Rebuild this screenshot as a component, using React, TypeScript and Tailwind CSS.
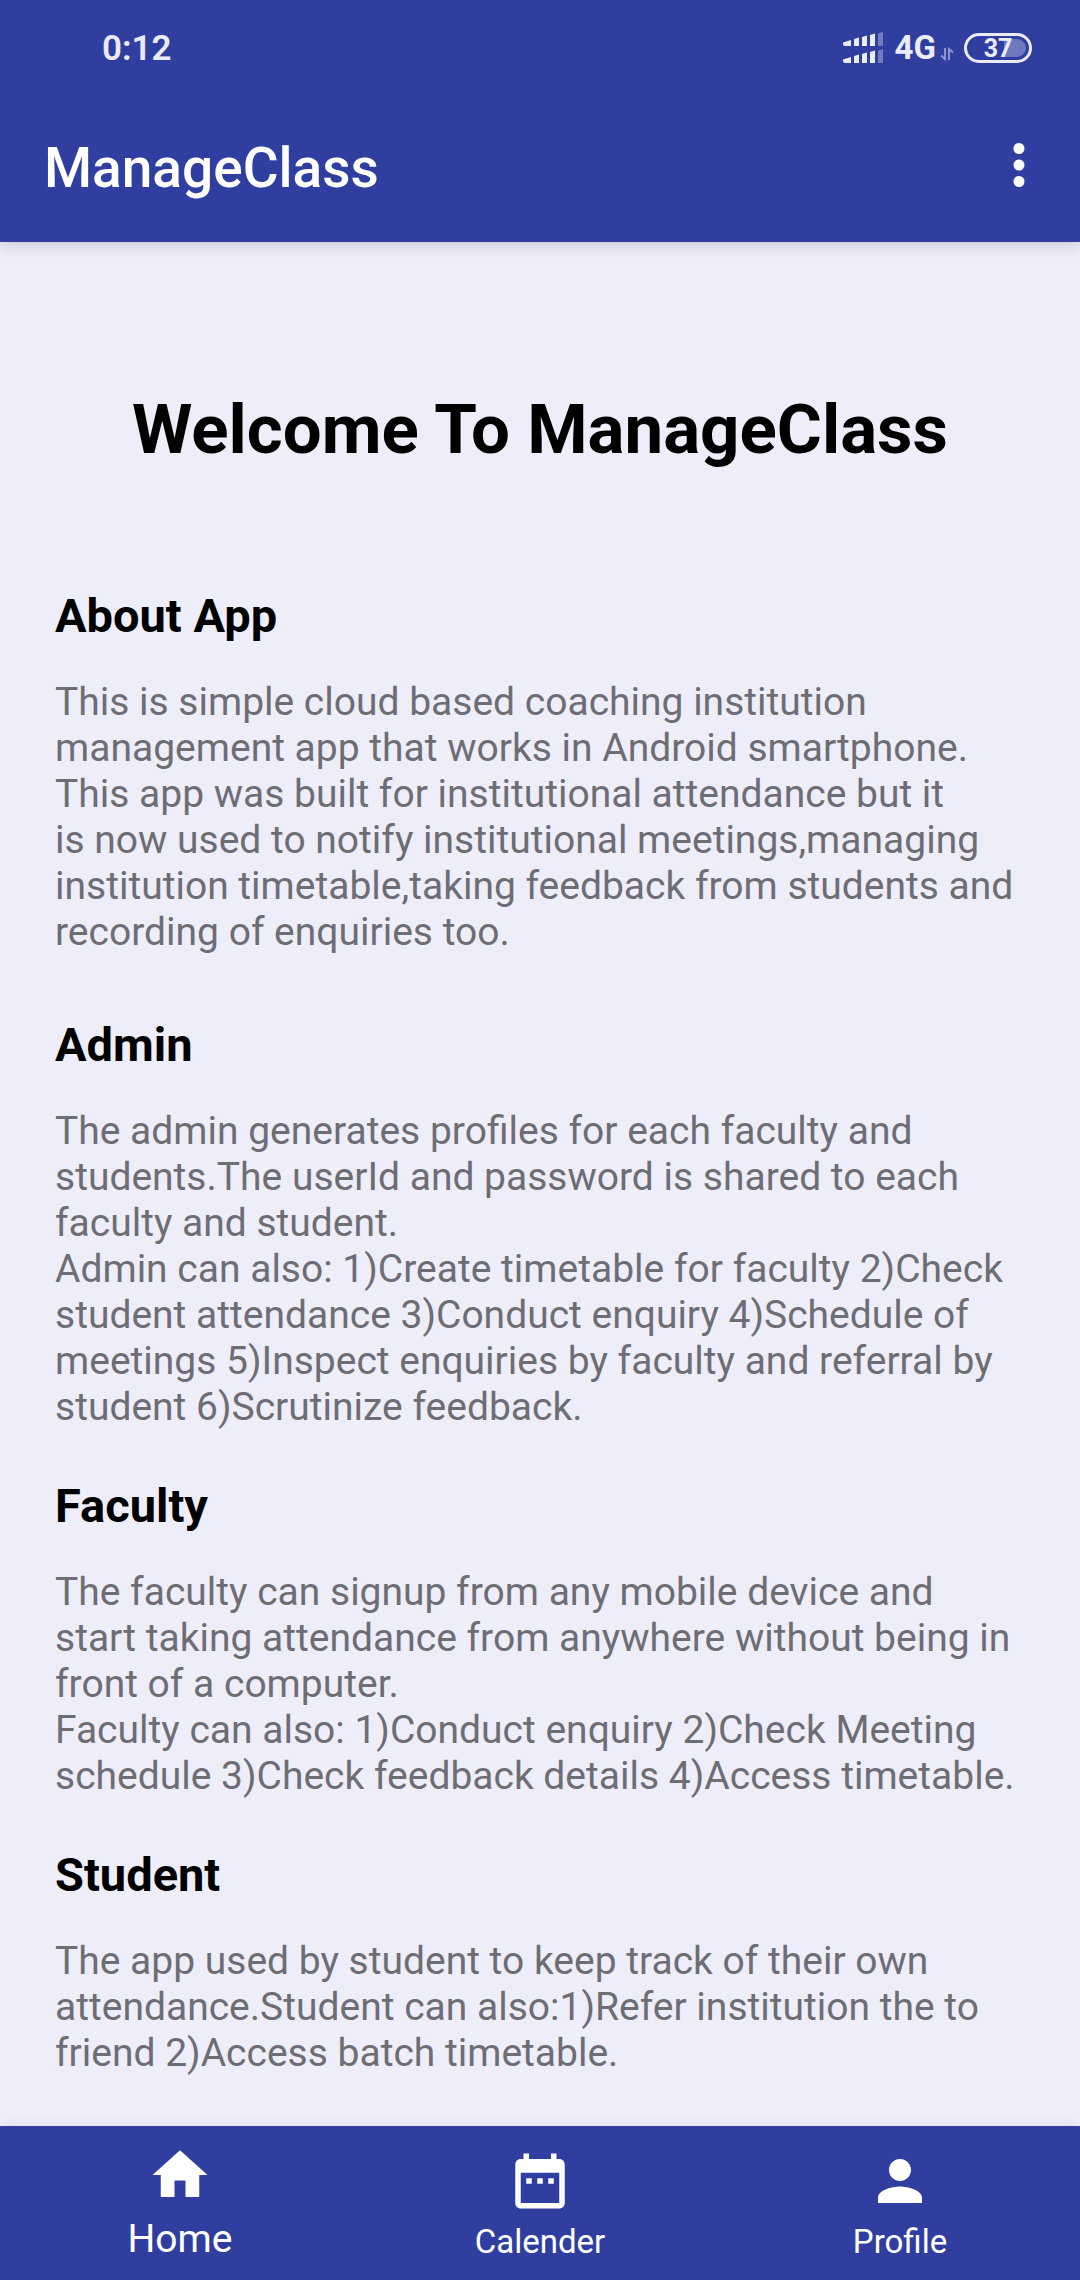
import { ReactNode } from "react";

function StatusBar() {
  return (
    <div className="flex h-[88px] items-center justify-between pt-2 pr-12 pl-[102px] text-[#ebebf7]">
      <span className="pt-0.5 text-[35px] leading-10 font-semibold">0:12</span>
      <div className="flex items-center">
        <svg className="mr-3 h-8 w-10" viewBox="0 0 40 32" fill="currentColor" aria-hidden="true">
          <path d="M0 10.500 8 8V14H2Q0 14 0 12ZM11 7l5-1.500v8.500h-5ZM19 5 24 3.500v10.500h-5ZM27 3l5-1.500V14h-5Z" />
          <path d="M35 1.500 40 0v14h-5Z" opacity=".35" />
          <path d="M0 27.500 8 25V31H2Q0 31 0 29ZM11 24l5-1.500v8.500h-5ZM19 22l5-1.500v10.500h-5ZM27 20l5-1.500V31h-5Z" />
          <path d="M35 18.500 40 17v14h-5Z" opacity=".35" />
        </svg>
        <span className="text-[33px] leading-10 font-bold">4G</span>
        <svg className="mt-3 mr-2.5 ml-1 h-3.5 w-3.5" viewBox="0 0 14 14" fill="none" stroke="currentColor" strokeWidth="2" opacity=".5" aria-hidden="true">
          <path d="M5 1v11L1 8.500M9 13V2l4 3.500" />
        </svg>
        <div className="flex h-[30px] w-[68px] rounded-full border-3 border-current p-[3px]">
          <div className="flex flex-1 items-center justify-center rounded-full bg-linear-to-r from-transparent from-60% to-white/30 to-60% text-[25px] leading-none font-bold">
            37
          </div>
        </div>
      </div>
    </div>
  );
}

function Section({ title, children }: { title: string; children: ReactNode }) {
  return (
    <section>
      <h3 className="text-[47px] leading-[54px] font-bold">{title}</h3>
      <div className="mt-9 text-[39px] leading-[46px] text-[#6e6d74]">{children}</div>
    </section>
  );
}

function NavItem({ label, icon, active = false }: { label: string; icon: string; active?: boolean }) {
  return (
    <a href="#" aria-current={active ? "page" : undefined} className="flex flex-col items-center gap-2">
      <svg className="size-[66px]" viewBox="0 0 24 24" fill="currentColor" aria-hidden="true">
        <path d={icon} />
      </svg>
      <span className={active ? "text-[39px] leading-[46px]" : "text-[33px] leading-10"}>{label}</span>
    </a>
  );
}

const homeIcon = "M10 20v-6h4v6h5v-8h3L12 3 2 12h3v8z";
const calendarIcon =
  "M9 11H7v2h2v-2zm4 0h-2v2h2v-2zm4 0h-2v2h2v-2zm2-7h-1V2h-2v2H8V2H6v2H5c-1.11 0-1.99.9-1.99 2L3 20c0 1.1.89 2 2 2h14c1.1 0 2-.9 2-2V6c0-1.1-.9-2-2-2zm0 16H5V9h14v11z";
const profileIcon =
  "M12 12c2.210 0 4-1.790 4-4s-1.790-4-4-4-4 1.790-4 4 1.790 4 4 4zm0 2c-2.670 0-8 1.340-8 4v2h16v-2c0-2.660-5.330-4-8-4z";

export default function App() {
  return (
    <div className="flex min-h-screen flex-col bg-[#eeeefb] font-['Roboto',sans-serif] text-black">
      <header className="bg-[#303f9f] text-white shadow-[0_3px_14px_rgba(0,0,0,0.16)]">
        <StatusBar />
        <div className="flex h-[154px] items-center justify-between pr-7 pl-11">
          <h1 className="pt-1.5 text-[55px] leading-[64px] font-medium">ManageClass</h1>
          <button type="button" aria-label="More options">
            <svg className="size-[66px]" viewBox="0 0 24 24" fill="currentColor" aria-hidden="true">
              <circle cx="12" cy="6" r="2" />
              <circle cx="12" cy="12" r="2" />
              <circle cx="12" cy="18" r="2" />
            </svg>
          </button>
        </div>
      </header>

      <main className="flex-1 px-[55px] pt-[148px] pb-12">
        <h2 className="text-center text-[69px] leading-[80px] font-bold">Welcome To ManageClass</h2>
        <div className="mt-[119px] flex flex-col gap-[49px]">
          <div className="pb-3.5">
            <Section title="About App">
              <p>
                This is simple cloud based coaching institution management app that works in Android smartphone.
                <br />
                This app was built for institutional attendance but it
                <br />
                is now used to notify institutional meetings,managing institution timetable,taking feedback from
                students and recording of enquiries too.
              </p>
            </Section>
          </div>
          <Section title="Admin">
            <p>
              The admin generates profiles for each faculty and students.The userId and password is shared to each
              faculty and student.
            </p>
            <p>
              Admin can also: 1)Create timetable for faculty 2)Check student attendance 3)Conduct enquiry 4)Schedule of
              meetings 5)Inspect enquiries by faculty and referral by student 6)Scrutinize feedback.
            </p>
          </Section>
          <Section title="Faculty">
            <p>
              The faculty can signup from any mobile device and
              <br />
              start taking attendance from anywhere without being in front of a computer.
            </p>
            <p>
              Faculty can also: 1)Conduct enquiry 2)Check Meeting schedule 3)Check feedback details 4)Access timetable.
            </p>
          </Section>
          <Section title="Student">
            <p>
              The app used by student to keep track of their own attendance.Student can also:1)Refer institution the to
              friend 2)Access batch timetable.
            </p>
          </Section>
        </div>
      </main>

      <nav className="grid h-[154px] grid-cols-3 items-end bg-[#303f9f] pb-[18px] text-white shadow-[0_-2px_12px_rgba(0,0,0,0.06)]">
        <NavItem label="Home" icon={homeIcon} active />
        <NavItem label="Calender" icon={calendarIcon} />
        <NavItem label="Profile" icon={profileIcon} />
      </nav>
    </div>
  );
}
